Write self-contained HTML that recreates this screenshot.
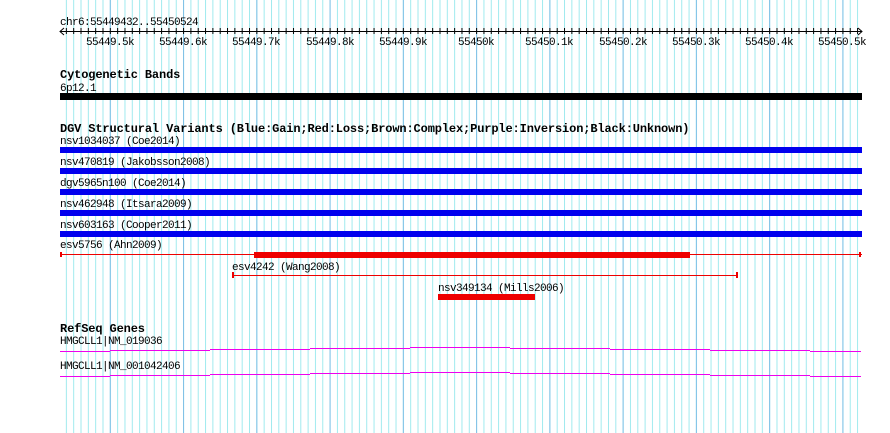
<!DOCTYPE html>
<html><head><meta charset="utf-8"><style>
html,body{margin:0;padding:0;background:#fff;}
svg{display:block;}
.t{font-family:"Liberation Mono",monospace;font-size:11px;letter-spacing:-0.6px;fill:#000;}
.b{font-family:"Liberation Mono",monospace;font-size:12px;font-weight:bold;fill:#000;letter-spacing:-0.13px;}
</style></head><body>
<svg width="890" height="433" xmlns="http://www.w3.org/2000/svg">
<defs>
<pattern id="lg" x="65.86" y="0" width="7.326" height="433" patternUnits="userSpaceOnUse">
<rect x="0" y="0" width="1" height="433" fill="#a0eaee"/>
</pattern>
<pattern id="dg" x="109.8" y="0" width="73.26" height="433" patternUnits="userSpaceOnUse">
<rect x="0" y="0" width="1" height="433" fill="#80c0e6"/>
</pattern>
<pattern id="tk" x="65.86" y="0" width="7.326" height="433" patternUnits="userSpaceOnUse">
<rect x="0" y="28" width="1" height="6" fill="#000"/>
</pattern>
</defs>
<rect x="65" y="0" width="797" height="433" fill="url(#lg)"/>
<rect x="65" y="0" width="797" height="433" fill="url(#dg)"/>
<text class="t" x="60" y="25">chr6:55449432..55450524</text>
<rect x="60" y="31" width="802" height="1" fill="#000"/>
<rect x="65" y="0" width="797" height="433" fill="url(#tk)"/>
<path d="M64 28 L60 31.5 L64 35 M858 28 L862 31.5 L858 35" stroke="#000" fill="none"/>
<g class="t" text-anchor="middle">
<text x="110" y="45">55449.5k</text><text x="183" y="45">55449.6k</text><text x="256" y="45">55449.7k</text>
<text x="330" y="45">55449.8k</text><text x="403" y="45">55449.9k</text><text x="476" y="45">55450k</text>
<text x="549" y="45">55450.1k</text><text x="623" y="45">55450.2k</text><text x="696" y="45">55450.3k</text>
<text x="769" y="45">55450.4k</text><text x="842" y="45">55450.5k</text>
</g>
<text class="b" x="60" y="78">Cytogenetic Bands</text>
<text class="t" x="60" y="91">6p12.1</text>
<rect x="60" y="93" width="802" height="7" fill="#000"/>
<text class="b" x="60" y="132">DGV Structural Variants (Blue:Gain;Red:Loss;Brown:Complex;Purple:Inversion;Black:Unknown)</text>
<text class="t" x="60" y="144">nsv1034037 (Coe2014)</text>
<rect x="60" y="147" width="802" height="6" fill="#0000ee"/>
<text class="t" x="60" y="165">nsv470819 (Jakobsson2008)</text>
<rect x="60" y="168" width="802" height="6" fill="#0000ee"/>
<text class="t" x="60" y="186">dgv5965n100 (Coe2014)</text>
<rect x="60" y="189" width="802" height="6" fill="#0000ee"/>
<text class="t" x="60" y="207">nsv462948 (Itsara2009)</text>
<rect x="60" y="210" width="802" height="6" fill="#0000ee"/>
<text class="t" x="60" y="228">nsv603163 (Cooper2011)</text>
<rect x="60" y="231" width="802" height="6" fill="#0000ee"/>
<text class="t" x="60" y="248">esv5756 (Ahn2009)</text>
<rect x="60" y="254" width="802" height="1" fill="#ee0000"/>
<rect x="60" y="252" width="2" height="5" fill="#ee0000"/>
<rect x="859" y="252" width="2" height="5" fill="#ee0000"/>
<rect x="254" y="252" width="436" height="6" fill="#ee0000"/>
<text class="t" x="232" y="270">esv4242 (Wang2008)</text>
<rect x="232" y="275" width="505" height="1" fill="#ee0000"/>
<rect x="232" y="272" width="2" height="6" fill="#ee0000"/>
<rect x="736" y="272" width="2" height="6" fill="#ee0000"/>
<text class="t" x="438" y="291">nsv349134 (Mills2006)</text>
<rect x="438" y="294" width="97" height="6" fill="#ee0000"/>
<text class="b" x="60" y="332">RefSeq Genes</text>
<text class="t" x="60" y="344">HMGCLL1|NM_019036</text>
<g fill="#ee00ee">
<rect x="60" y="351" width="50" height="1"/><rect x="110" y="350" width="100" height="1"/>
<rect x="210" y="349" width="100" height="1"/><rect x="310" y="348" width="100" height="1"/>
<rect x="410" y="347" width="100" height="1"/><rect x="510" y="348" width="100" height="1"/>
<rect x="610" y="349" width="100" height="1"/><rect x="710" y="350" width="100" height="1"/>
<rect x="810" y="351" width="51" height="1"/>
</g>
<text class="t" x="60" y="369">HMGCLL1|NM_001042406</text>
<g fill="#ee00ee">
<rect x="60" y="376" width="50" height="1"/><rect x="110" y="375" width="100" height="1"/>
<rect x="210" y="374" width="100" height="1"/><rect x="310" y="373" width="100" height="1"/>
<rect x="410" y="372" width="100" height="1"/><rect x="510" y="373" width="100" height="1"/>
<rect x="610" y="374" width="100" height="1"/><rect x="710" y="375" width="100" height="1"/>
<rect x="810" y="376" width="51" height="1"/>
</g>
</svg>
</body></html>
